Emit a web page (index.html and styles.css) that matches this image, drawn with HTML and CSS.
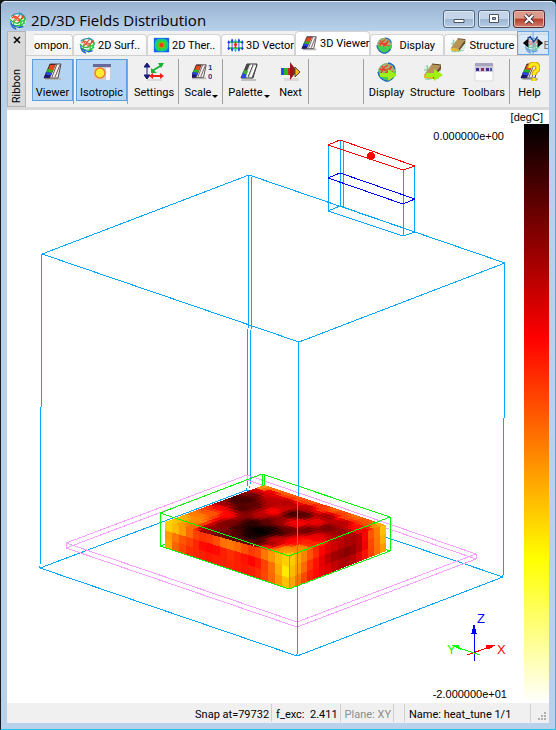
FILE: index.html
```
<!DOCTYPE html>
<html lang="en">
<head>
    <meta charset="UTF-8">
    <meta name="viewport" content="width=device-width, initial-scale=1.0">
    <title>2D/3D Fields Distribution</title>
    <link rel="stylesheet" href="styles.css">
</head>
<body>
    <svg class="defs" aria-hidden="true">
        <defs>
            <symbol id="net" viewBox="0 0 20 20">
                <path d="M2 3L9 1l8 3 2 8-6 7-8-1-4-7z" fill="#f0f8f4"/>
                <g fill="none" stroke-width="1.4">
                    <path d="M2 5Q6 1 11 2t6 5M11 1q7 2 7 8" stroke="#289ab0"/>
                    <path d="M3 7q4-4 7 0t7-3M5 3q2 7 8 7M12 3Q9 8 5 11M15 4q-1 6-6 9" stroke="#f04a24"/>
                    <path d="M1 8q6 8 16 1M2 13q7 5 16-1M6 8q-3 6 2 11M12 7q3 6-1 11M18 6q-1 8-7 12" stroke="#28c83c"/>
                    <path d="M2 10q0 7 6 9M4 14q5 5 12 2" stroke="#2454e0"/>
                </g>
            </symbol>
            <symbol id="ball" viewBox="0 0 20 20">
                <ellipse cx="10" cy="10" rx="9" ry="9" fill="#58b868"/>
                <path d="M2 8q2-6 8-7 7 1 8 8l-4 3H5z" fill="#a8ae72"/>
                <g fill="none" stroke-width="1.4">
                    <path d="M3 7q6 3 12-2M5 4q2 6 11 6M11 3Q6 6 4 11M14 4q-1 6-6 7" stroke="#f03c28"/>
                    <path d="M2 11q8 4 16-1M3 14q8 3 14-1M7 10q-1 5 2 9M13 10q2 4-2 9" stroke="#30e040"/>
                    <path d="M1 10q1 7 8 9h3M17 14q-2 4-6 5M11 1q6 1 7 6" stroke="#2068c0"/>
                </g>
            </symbol>
            <symbol id="therm" viewBox="0 0 20 20">
                <path d="M1 1h18v17H1z" fill="#1464f0"/>
                <rect x="2" y="2" width="16" height="15" rx="6" fill="#18c890"/>
                <rect x="4" y="4" width="12" height="11" rx="5" fill="#18e030"/>
                <circle cx="10" cy="9.500" r="4" fill="#a0a818"/>
                <circle cx="10" cy="9.500" r="2.500" fill="#e83c18"/>
            </symbol>
            <symbol id="vector" viewBox="0 0 20 20">
                <path d="M1 6h18M1 13h18" stroke="#20d838" stroke-width="2"/>
                <g stroke="#2038f0" fill="#2038f0">
                    <path d="M2 4v11M6 2v15M14 2v15M18 4v11"/>
                    <path d="M1 7l1-2 1 2zM1 13l1 2 1-2zM5 5l1-2 1 2zM5 14l1 2 1-2zM13 5l1-2 1 2zM13 14l1 2 1-2zM17 7l1-2 1 2zM17 13l1 2 1-2z"/>
                </g>
                <path d="M10 3v14M9 5l1-2 1 2zM9 15l1 2 1-2z" stroke="#18b8d0" fill="#18b8d0"/>
                <path d="M10 6v7M8 9h4" stroke="#f02818" stroke-width="2"/>
            </symbol>
            <symbol id="book" viewBox="0 0 20 20">
                <path d="M3 16h15v2H2z" fill="#b8b8b8"/>
                <path d="M7 2h11l-3 14H1z" fill="#f4f0f0" stroke="#504848"/>
                <path d="M7 2h6L7 16H1z" fill="#502828"/>
                <path d="M7 3h5l-2 6H5z" fill="#e84818"/>
                <path d="M5 7l5 1-1 3-6-1z" fill="#30b028"/>
                <path d="M3 10l6 1-1 3-6-2z" fill="#2048e8"/>
                <path d="M2 13l5 0-1 3H1z" fill="#181878"/>
                <path d="M17 3l-5 12M14 2L9 15" stroke="#6c5454" fill="none"/>
            </symbol>
            <symbol id="graybook" viewBox="0 0 20 20">
                <path d="M3 17h14v2H2z" fill="#c0c0c0"/>
                <path d="M8 2h10l-4 14H2z" fill="#dcdcdc" stroke="#303030"/>
                <path d="M11 2L5 16H2L8 2z" fill="#484848"/>
                <path d="M4 10l4 3-1 3H2z" fill="#2848e0"/>
                <path d="M5 8l4 1-1 4-4-2z" fill="#40b030"/>
                <path d="M13 3L8 15M16 4l-4 11" stroke="#fff" stroke-width="2"/>
                <path d="M14 3L9 15M18 3l-5 13" stroke="#484848"/>
            </symbol>
            <symbol id="wood" viewBox="0 0 20 20">
                <path d="M2 4h15l1 9-6 5H3z" fill="#d4f0dc"/>
                <path d="M1 8h17M2 17l14-1M4 3l2 15" stroke="#78c0a0" fill="none"/>
                <path d="M9 2l9 1-8 11-9-1z" fill="#b89458"/>
                <path d="M18 3v4l-8 10v-3z" fill="#6c4a28"/>
                <path d="M1 13l9 1v3l-9-1z" fill="#e4b828"/>
                <path d="M9 2l9 1" stroke="#604020"/>
            </symbol>
            <symbol id="arrow" viewBox="0 0 20 20">
                <path d="M3 11h8V7l9 6-9 6v-4H3z" fill="#a0f018"/>
            </symbol>
            <symbol id="iso" viewBox="0 0 20 20">
                <path d="M1 2h18v16H1z" fill="#ccccd8"/>
                <path d="M1 2h18v3H1z" fill="#68689c"/>
                <path d="M14 6h4v12h-4z" fill="#f8f8fc"/>
                <circle cx="8" cy="11" r="5" fill="#ffec30" stroke="#f08020" stroke-width="1.500"/>
            </symbol>
            <symbol id="axes" viewBox="0 0 20 20">
                <path d="M3 17h15v2H3z" fill="#dadada"/>
                <path d="M3 3v12M0 5l3-4 3 4zM0 13l3 4 3-4z" stroke="#181878" fill="#181878"/>
                <path d="M8 9l10-6" stroke="#18b030" stroke-width="2"/>
                <path d="M14 1h6l-3 5zM7 6v5h6z" fill="#18b030"/>
                <path d="M7 14h11" stroke="#f02018" stroke-width="2"/>
                <path d="M9 11v6l-4-3zM16 11v6l4-3z" fill="#f02018"/>
            </symbol>
            <symbol id="next" viewBox="0 0 20 20">
                <path d="M3 16h15v3H3z" fill="#dadada"/>
                <path d="M0 6h3v7H0z" fill="#2848e8"/>
                <path d="M3 6h4v7H3z" fill="#28b828"/>
                <path d="M7 6h3v7H7z" fill="#c82818"/>
                <path d="M9 0l7 9-7 9z" fill="#9c1818"/>
                <path d="M14 5l5 5-5 5z" fill="#f0b818" stroke="#604040"/>
            </symbol>
            <symbol id="bars" viewBox="0 0 20 20">
                <path d="M1 2h18v17H1z" fill="#fcfcfc" stroke="#dcdce0"/>
                <path d="M1 1h18v3H1z" fill="#a8a4bc"/>
                <path d="M1 4h18v6H1z" fill="#ccc8dc"/>
                <path d="M2 6h3v3H2zM12 6h3v3h-3z" fill="#3c2c98"/>
                <path d="M7 6h3v3H7z" fill="#902c60"/>
                <path d="M16 6h2v3h-2z" fill="#4858a8"/>
            </symbol>
        </defs>
    </svg>

    <div class="window">
        <header class="titlebar">
            <svg class="app-icon"><use href="#net"/></svg>
            <h1>2D/3D Fields Distribution</h1>
            <div class="caption-buttons">
                <button aria-label="Minimize"><svg viewBox="0 0 12 12"><path d="M1 6.500h10v3H1z" fill="#fff" stroke="#4c5460"/></svg></button>
                <button aria-label="Maximize"><svg viewBox="0 0 12 12"><path d="M1.500 1.500h9v8h-9z" fill="#fff" stroke="#4c5460"/><path d="M4.500 4.500h3v2h-3z" fill="#9cb4d0" stroke="#4c5460"/></svg></button>
                <button class="close" aria-label="Close"><svg viewBox="0 0 12 12"><path d="M2 2l8 8M10 2l-8 8" stroke="#4c3840" stroke-width="4"/><path d="M2 2l8 8M10 2l-8 8" stroke="#fff" stroke-width="2"/></svg></button>
            </div>
        </header>

        <div class="ribbon">
            <div class="ribbon-side">
                <button aria-label="Close ribbon"><svg viewBox="0 0 8 8"><path d="M1 1l6 6M7 1L1 7" stroke="#000" stroke-width="1.500"/></svg></button>
                <span>Ribbon</span>
            </div>
            <div class="ribbon-main">
                <nav class="tabs">
                    <button class="tab first"><span>ompon.</span></button>
                    <button class="tab"><svg><use href="#net"/></svg><span>2D Surf..</span></button>
                    <button class="tab"><svg><use href="#therm"/></svg><span>2D Ther..</span></button>
                    <button class="tab"><svg><use href="#vector"/></svg><span>3D Vector</span></button>
                    <button class="tab active"><svg><use href="#book"/></svg><span>3D Viewer</span></button>
                    <button class="tab"><svg><use href="#ball"/></svg><span class="wide">Display</span></button>
                    <button class="tab"><svg><use href="#wood"/></svg><span>Structure</span></button>
                    <button class="tab last"><svg><use href="#net"/></svg><span>E</span></button>
                    <button class="tab-scroll" aria-label="Scroll tabs"><svg viewBox="0 0 32 24"><path d="M16 0v24" stroke="#6aa5e0" stroke-width="1"/><path d="M5 12l6-5v10zM27 12l-6-5v10z" fill="#000"/><path d="M10 7l3-2 4 6 4-6" fill="none" stroke="#183888" stroke-width="1.500"/></svg></button>
                </nav>
                <div class="tools">
                    <button class="tool w41 on"><svg><use href="#book"/></svg>Viewer</button>
                    <i class="sep"></i>
                    <button class="tool w51 on"><svg><use href="#iso"/></svg>Isotropic</button>
                    <i class="sep"></i>
                    <button class="tool w48"><svg><use href="#axes"/></svg>Settings</button>
                    <i class="sep"></i>
                    <button class="tool w41"><svg viewBox="0 0 20 20"><use href="#book" x="-2" width="18" height="20"/><g class="digits"><text x="16" y="8">1</text><text x="16" y="17">0</text></g></svg><span class="drop">Scale</span></button>
                    <i class="sep"></i>
                    <button class="tool w48"><svg><use href="#graybook"/></svg><span class="drop">Palette</span></button>
                    <button class="tool w35"><svg><use href="#next"/></svg>Next</button>
                    <i class="sep"></i>
                    <div class="space"></div>
                    <i class="sep"></i>
                    <button class="tool w41"><svg><use href="#ball"/><use href="#arrow"/></svg>Display</button>
                    <button class="tool w51"><svg><use href="#wood"/><use href="#arrow"/></svg>Structure</button>
                    <button class="tool w51"><svg><use href="#bars"/></svg>Toolbars</button>
                    <i class="sep"></i>
                    <button class="tool w35"><svg viewBox="0 0 20 20"><use href="#book"/><path d="M10 6q0-4 4-4t4 4q0 2-2 3t-2 4M14 16v3" fill="none" stroke="#d8a000" stroke-width="5"/><path d="M10 6q0-4 4-4t4 4q0 2-2 3t-2 4M14 16v3" fill="none" stroke="#ffe818" stroke-width="3"/></svg>Help</button>
                </div>
            </div>
        </div>

        <main class="view">
            <svg class="scene" viewBox="7 110 517 593" preserveAspectRatio="xMidYMid meet" shape-rendering="crispEdges">
                <g class="sky">
                    <path d="M40 568L247 490L503 577M249 175L247 490M252 177L250 488"/>
                </g>
                <g class="pink">
                    <path d="M66 543L247 475L476 554M66 548L247 480L476 559M247 475v5"/>
                </g>
                <g class="green"><path d="M160 546L262 508L390 551M262 474v34M264 475v34"/></g>
                <g id="mesh"></g>
                <g class="pink">
                    <path d="M66 543L297 622L476 554M66 548L297 627L476 559M66 543v5M297 622v5M476 554v5"/>
                </g>
                <g class="green">
                    <path d="M160 513L262 474L390 517L289 556zM160 546L289 589L390 551M160 513v33M289 556v33M390 517v34"/>
                </g>
                <g class="sky">
                    <path d="M42 254L249 175L505 263L299 342zM40 568L297 656L503 577M42 254L40 568M299 342L297 656M505 263L503 577"/>
                    <path d="M328 144v67M340 140v66M343 142v65M415 166L414 232M404 170L403 236M328 211L340 206L415 232L403 236z"/>
                </g>
                <path class="navy" d="M328 178L340 173L415 199L403 204z"/>
                <path class="red" d="M328 145L340 140L415 166L403 170z"/>
                <circle class="heat-point" cx="371" cy="156" r="4"/>

                <g class="axis z"><path d="M474 661V630"/><path class="tip" d="M472 633l2-8 2 8z"/><text x="477" y="623">Z</text></g>
                <g class="axis x"><path d="M467 655L490 647"/><path class="tip" d="M486 646l9-1-7 4z"/><text x="497" y="654">X</text></g>
                <g class="axis y"><path d="M480 655L456 647"/><path class="tip" d="M460 649l-8-4 6 0z"/><text x="447" y="654">Y</text></g>
            </svg>
            <div class="legend"></div>
            <span class="unit">[degC]</span>
            <span class="max">0.000000e+00</span>
            <span class="min">-2.000000e+01</span>
        </main>

        <footer class="status">
            <span>Snap at=79732</span>
            <span>f_exc:&nbsp; 2.411</span>
            <span class="dim">Plane: XY</span>
            <span class="blank"></span>
            <span class="name">Name: heat_tune 1/1</span>
            <svg class="grip" viewBox="0 0 9 9"><path d="M6 0h2v2H6zM3 3h2v2H3zM6 3h2v2H6zM0 6h2v2H0zM3 6h2v2H3zM6 6h2v2H6z" fill="#b0b0b0"/></svg>
        </footer>
    </div>
    <script src="mesh.js"></script>
</body>
</html>
```
FILE: styles.css
```
* {
    box-sizing: border-box;
}
body {
    margin: 0;
    background-color: #101418;
    font-family: Roboto, "Liberation Sans", sans-serif;
    font-size: 11px;
    color: #000;
}
button {
    margin: 0;
    padding: 0;
    border: none;
    background: none;
    font: inherit;
    color: inherit;
}
.defs {
    position: absolute;
    width: 0;
    height: 0;
}
.window {
    display: flex;
    flex-direction: column;
    min-height: 100vh;
    padding: 0 6px 6px;
    border: 1px solid #141c24;
    border-right-color: #20c0e8;
    border-bottom-color: #20c0e8;
    border-radius: 6px 6px 0 0;
    background: #b9d1ea;
}
.titlebar {
    display: flex;
    align-items: center;
    height: 30px;
    margin: 0 -6px;
    padding: 0 10px 0 8px;
    border-top: 1px solid #e4eef8;
    border-radius: 5px 5px 0 0;
    background: linear-gradient(#98b3d2, #b9d1ea);
}
.app-icon {
    width: 18px;
    height: 18px;
    margin-top: 8px;
}
h1 {
    flex: 1;
    margin: 6px 0 0 4px;
    font: 15px "Open Sans", sans-serif;
}
.caption-buttons {
    display: flex;
    gap: 3px;
    margin-top: 4px;
}
.caption-buttons button {
    display: flex;
    align-items: center;
    justify-content: center;
    width: 32px;
    height: 18px;
    border: 1px solid #55677d;
    border-radius: 3px;
    background: linear-gradient(#c4d5e9 50%, #9cb5d0 50%, #b7cde5);
    box-shadow: inset 0 0 0 1px #dce8f4;
}
.caption-buttons svg {
    width: 12px;
    height: 12px;
}
.caption-buttons .close {
    border-color: #582830;
    background: linear-gradient(#dc9a8c 45%, #b83c28 50%, #d08070);
    box-shadow: inset 0 0 0 1px #e8b8ac;
}

/* ribbon */
.ribbon {
    display: flex;
    height: 79px;
    background-color: #f0f0f0;
    border-bottom: 3px solid #d9d9d9;
}
.ribbon-side {
    display: flex;
    flex-direction: column;
    align-items: center;
    justify-content: space-between;
    width: 19px;
    padding: 4px 0 3px;
    border: 1px solid #b4b4b4;
    background-color: #d9d9d9;
}
.ribbon-side button {
    display: flex;
}
.ribbon-side svg {
    width: 8px;
    height: 8px;
}
.ribbon-side span {
    writing-mode: vertical-rl;
    transform: rotate(180deg);
}
.ribbon-main {
    flex: 1;
    min-width: 0;
}
.tabs {
    position: relative;
    display: flex;
    align-items: flex-end;
    height: 25px;
    padding-left: 8px;
    border-bottom: 1px solid #cfcfcf;
    overflow: hidden;
}
.tab {
    display: flex;
    flex: 0 0 74px;
    align-items: center;
    height: 21px;
    padding-left: 5px;
    border: 1px solid #d4d4d4;
    border-bottom: none;
    border-radius: 4px 4px 0 0;
    background: linear-gradient(#fff, #f4f4f4);
    white-space: nowrap;
}
.tab.first {
    flex-basis: 39px;
    padding: 0;
    border-left: none;
    border-top-left-radius: 0;
}
.tab.first span {
    margin-left: 0;
}
.tab.active {
    height: 24px;
    background: #fff;
}
.tab svg {
    flex: none;
    width: 17px;
    height: 17px;
}
.tab span {
    margin-left: 2px;
}
.tab .wide {
    margin-left: 6px;
}
.tab-scroll {
    position: absolute;
    top: 0;
    right: 0;
    width: 32px;
    height: 24px;
    border: 1px solid #6aa5e0;
    background-color: rgba(185, 215, 245, 0.5);
}
.tab-scroll svg {
    display: block;
    width: 100%;
    height: 100%;
}
.tools {
    display: flex;
    height: 51px;
    padding: 3px 2px 0 6px;
}
.tool {
    display: flex;
    flex-direction: column;
    align-items: center;
    flex: none;
    gap: 4px;
    height: 42px;
    padding-top: 3px;
    line-height: 13px;
    white-space: nowrap;
}
.tool svg {
    width: 20px;
    height: 20px;
}
.tool.on {
    border: 1px solid #5c9fe0;
    padding-top: 2px;
    background-color: #b4d4f4;
}
.w35 {
    width: 35px;
}
.w41 {
    width: 41px;
}
.w48 {
    width: 48px;
}
.w51 {
    width: 51px;
}
.sep {
    flex: none;
    width: 1px;
    height: 45px;
    margin-right: 2px;
    background-color: #a0a0a0;
}
.space {
    flex: 1;
}
.drop::after {
    content: "";
    display: inline-block;
    margin: 0 0 -2px 1px;
    border: 3px solid transparent;
    border-top-color: #000;
    border-bottom: none;
}
.digits {
    font: bold 8px "Liberation Sans", sans-serif;
    fill: #283890;
}

/* 3D view */
.view {
    position: relative;
    display: flex;
    flex: 1;
    background-color: #fff;
    font-family: "Liberation Sans", sans-serif;
}
.scene {
    flex: 1;
    min-width: 0;
    aspect-ratio: 517 / 593;
}
.scene path {
    fill: none;
}
.sky {
    stroke: #00a8ff;
}
.pink {
    stroke: #f8a0ff;
}
.green {
    stroke: #00ff00;
}
.navy {
    stroke: #0000ff;
}
.red {
    stroke: #ff0000;
}
.heat-point {
    fill: #ff0000;
}
.axis text {
    font-size: 13px;
    stroke: none;
}
.axis.x {
    stroke: #ff0000;
    fill: #ff0000;
}
.axis.y {
    stroke: #00ff00;
    fill: #00ff00;
}
.axis.z {
    stroke: #0000ff;
    fill: #0000ff;
}
.axis .tip {
    fill: inherit;
}
.legend {
    width: 25px;
    margin-top: 14px;
    background: linear-gradient(#000, #f00 37%, #ff0 75%, #fff);
}
.unit,
.max,
.min {
    position: absolute;
    line-height: 12px;
}
.unit {
    top: 1px;
    right: 6px;
}
.max {
    top: 20px;
    right: 45px;
}
.min {
    bottom: 3px;
    right: 42px;
}

/* status bar */
.status {
    display: flex;
    align-items: center;
    justify-content: flex-end;
    height: 20px;
    background-color: #f0f0f0;
}
.status span {
    padding: 4px 2px 0 4px;
    border-right: 1px solid #d0d0d0;
    line-height: 14px;
    white-space: nowrap;
}
.status .dim {
    color: #8c8c8c;
}
.status .blank {
    width: 11px;
    height: 18px;
}
.status .name {
    width: 126px;
}
.grip {
    align-self: flex-end;
    width: 9px;
    height: 9px;
    margin: 0 2px 2px 7px;
}
```
FILE: mesh.js
```
// temperature points on the top face: x, y, level (0 = black, 1 = white)
const points = [
    [170, 522, .68], [183, 518, .64], [197, 520, .58], [200, 515, .56], [213, 513, .5], [227, 515, .38],
    [217, 508, .38], [203, 512, .5], [220, 503, .22], [237, 500, .1], [253, 495, .15], [243, 508, .12],
    [257, 505, .14], [248, 500, .1], [263, 487, .6], [255, 492, .28], [270, 493, .32], [277, 490, .55],
    [273, 500, .28], [267, 505, .26], [273, 511, .38], [260, 515, .28], [247, 515, .2], [287, 503, .26],
    [287, 508, .3], [293, 514, .1], [303, 515, .12], [307, 508, .28], [323, 508, .46], [347, 517, .48],
    [367, 523, .5], [378, 528, .6], [360, 527, .4], [343, 523, .27], [327, 517, .24], [317, 522, .35],
    [300, 523, .36], [293, 523, .36], [307, 530, .17], [287, 530, .15], [327, 528, .18], [340, 532, .22],
    [277, 532, .08], [270, 530, .03], [257, 530, 0], [250, 528, .04], [263, 532, 0], [253, 535, .03],
    [237, 528, .1], [223, 528, .2], [207, 530, .22], [190, 527, .54], [180, 527, .62], [230, 523, .18],
    [253, 523, .07], [267, 522, .14], [280, 522, .22], [260, 542, .1], [270, 543, .25], [250, 545, .14],
    [233, 537, .13], [220, 533, .16], [277, 540, .3], [293, 542, .38], [307, 542, .42], [317, 538, .35],
    [287, 550, .6], [273, 552, .58], [263, 548, .45], [300, 548, .58], [288, 556, .7],
    [288, 493, .52], [300, 498, .5], [312, 502, .5], [335, 509, .52], [355, 516, .54], [380, 524, .64],
    [320, 545, .44], [350, 536, .26], [365, 531, .36], [335, 539, .28], [193, 512, .56], [205, 508, .46]
];

const leftFace = [
    [.68, .65, .6, .53, .47, .45, .46, .49, .54, .55, .53, .49, .46, .48, .55, .6, .65, .68],
    [.6, .55, .5, .47, .43, .39, .38, .39, .42, .44, .42, .4, .38, .41, .47, .54, .63, .72],
    [.62, .52, .48, .44, .43, .42, .41, .42, .42, .43, .42, .41, .42, .44, .48, .53, .6, .66]
];
const rightFace = [
    [.67, .62, .57, .5, .44, .38, .33, .3, .27, .25, .25, .27, .38, .5, .56, .66],
    [.65, .6, .53, .45, .4, .34, .28, .24, .22, .2, .22, .27, .36, .48, .55, .64],
    [.62, .55, .48, .42, .39, .35, .32, .29, .26, .25, .27, .32, .4, .47, .54, .6]
];

const mesh = document.getElementById('mesh');

function color(t) {
    const r = Math.min(255, t / .375 * 255);
    const g = Math.max(0, Math.min(255, (t - .375) / .375 * 255));
    return `rgb(${Math.round(r)}, ${Math.round(g)}, 0)`;
}

function level(x, y) {
    let sum = 0;
    let weight = 0;
    for (const [px, py, t] of points) {
        // rows are foreshortened, so vertical distance counts more
        const d = (x - px) ** 2 + ((y - py) * 2.2) ** 2 + 12;
        const w = 1 / (d * d);
        sum += t * w;
        weight += w;
    }
    return sum / weight;
}

function drawFace(a, b, c, d, cols, rows, value) {
    const at = (u, v) => [0, 1].map(i =>
        (a[i] * (1 - u) + b[i] * u) * (1 - v) + (d[i] * (1 - u) + c[i] * u) * v);
    for (let j = 0; j < rows; j++) {
        for (let i = 0; i < cols; i++) {
            const corners = [[i, j], [i + 1, j], [i + 1, j + 1], [i, j + 1]].map(p => at(p[0] / cols, p[1] / rows));
            const [x, y] = at((i + .5) / cols, (j + .5) / rows);
            const cell = document.createElementNS('http://www.w3.org/2000/svg', 'polygon');
            cell.setAttribute('points', corners.join(' '));
            cell.setAttribute('fill', color(value(i, j, x, y)));
            mesh.appendChild(cell);
        }
    }
}

drawFace([165, 522], [264, 485], [386, 525], [289, 556], 24, 27, (i, j, x, y) => level(x, y));
drawFace([165, 522], [289, 556], [289, 589], [165, 547], 18, 3, (i, j) => leftFace[j][i]);
drawFace([289, 556], [386, 525], [386, 551], [289, 589], 16, 3, (i, j) => rightFace[j][i]);
```
